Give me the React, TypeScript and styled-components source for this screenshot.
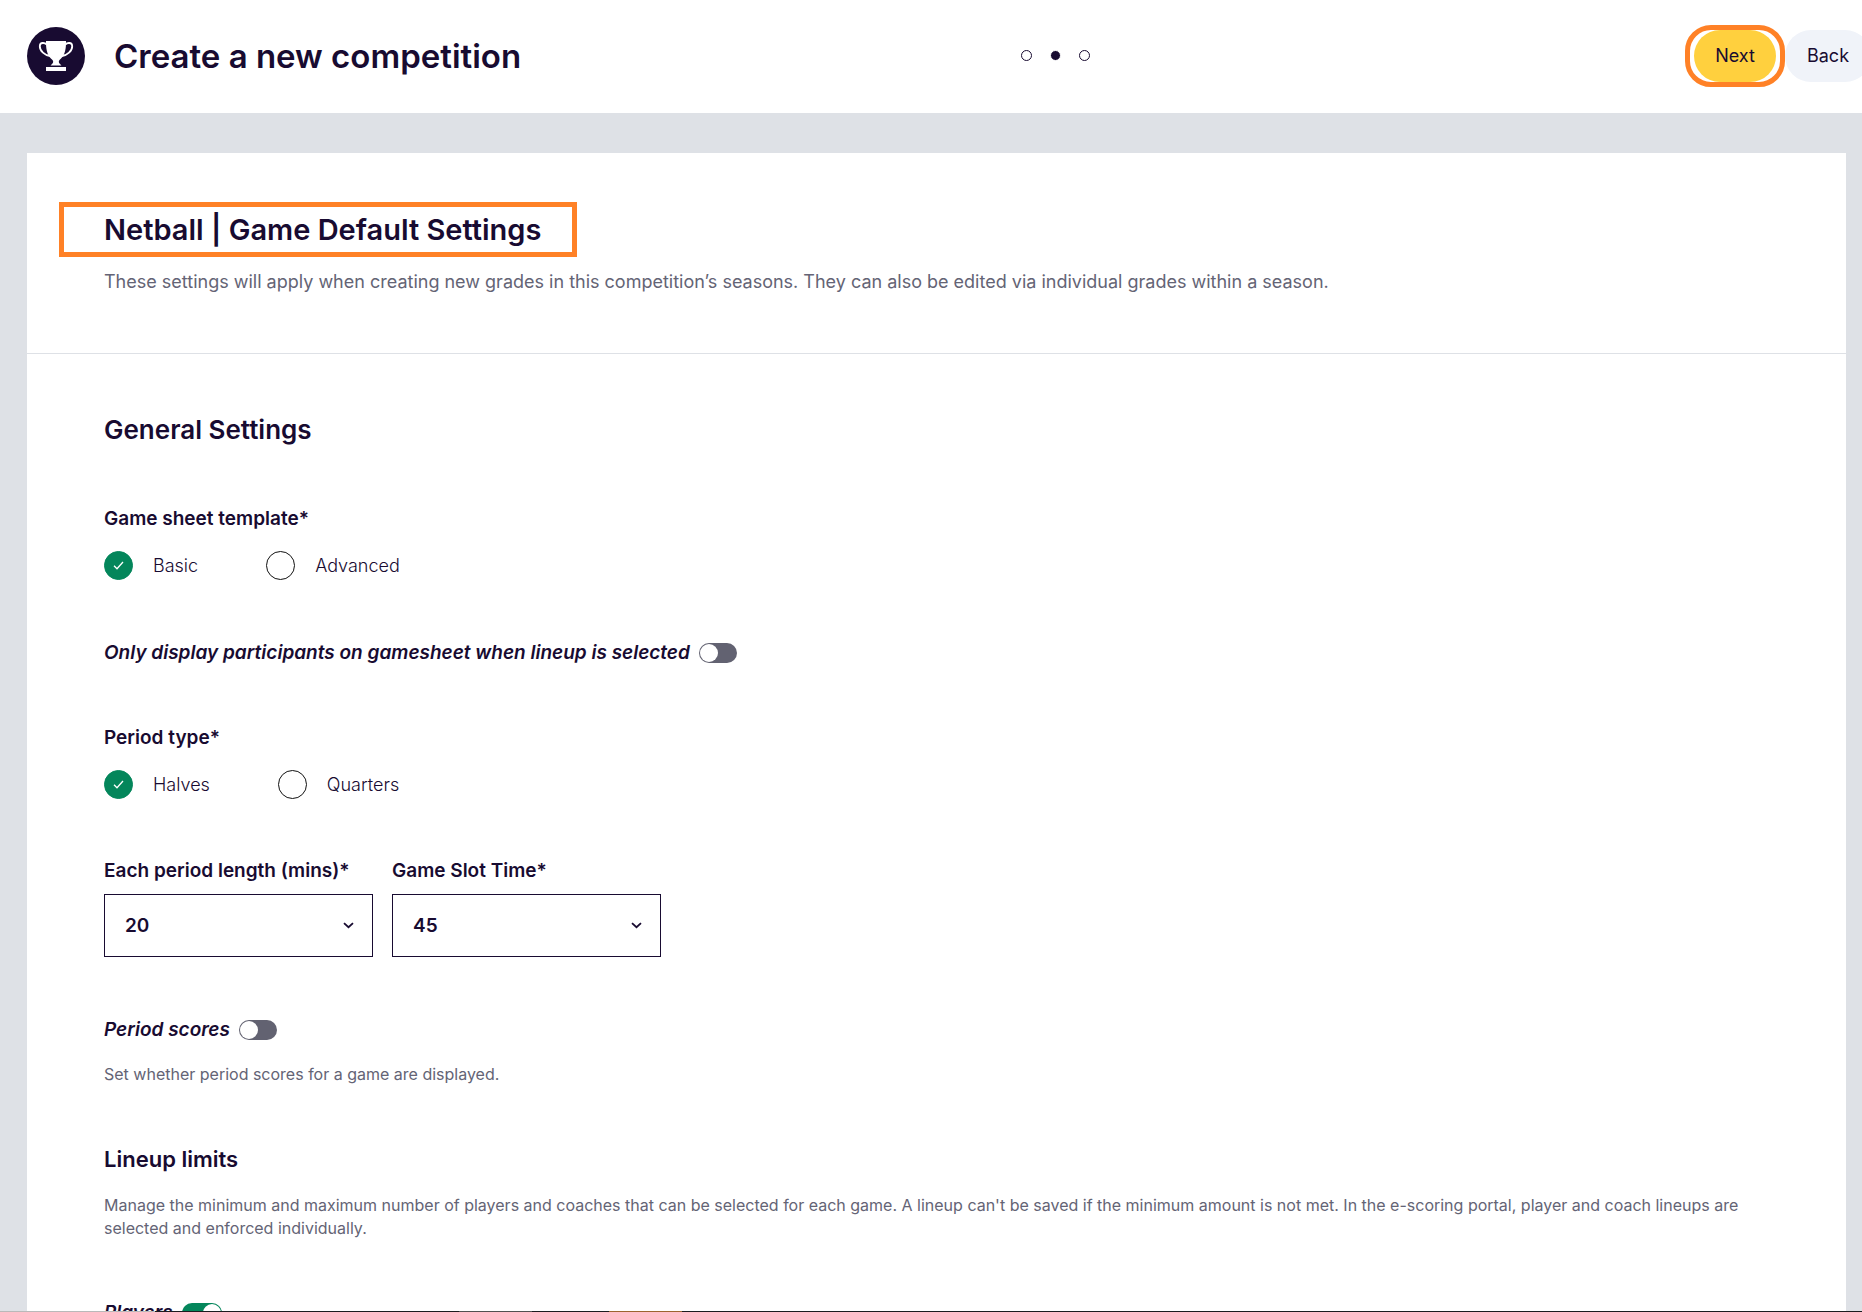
import React, { useState } from 'react';
import styled, { createGlobalStyle } from 'styled-components';

const ink = '#180b31';
const muted = '#646475';
const green = '#04865b';
const orange = '#ff8126';
const line = '#dee1e6';

const GlobalStyle = createGlobalStyle`
  *, *::before, *::after { box-sizing: border-box; }
  body { margin: 0; background: ${line}; }
  h1, h2, h3, h4, p { margin: 0; }
  body, button, input, select { font-family: Inter, "Liberation Sans", sans-serif; color: ${ink}; }
`;

const Shell = styled.div`
  display: flex;
  flex-direction: column;
  height: 100vh;
  overflow: hidden;
`;

const Header = styled.header`
  flex: none;
  display: grid;
  grid-template-columns: 14fr auto 11fr;
  align-items: center;
  height: 113px;
  padding: 0 0 2px 27px;
  margin-right: -9px;
  background: #fff;
`;

const Brand = styled.div`
  display: flex;
  align-items: center;
  gap: 29px;
`;

const PageTitle = styled.h1`
  font-size: 33px;
  line-height: 40px;
  font-weight: 600;
`;

const Steps = styled.ol`
  display: flex;
  align-items: center;
  gap: 18px;
  margin: 0;
  padding: 0;
  list-style: none;
`;

const Step = styled.li<{ $current?: boolean }>`
  width: 11px;
  height: 11px;
  border: 1px solid ${p => (p.$current ? '#fff' : ink)};
  border-radius: 50%;
  background: ${p => (p.$current ? ink : '#fff')};
`;

const Actions = styled.div`
  display: flex;
  justify-content: flex-end;
  align-items: center;
`;

const Highlight = styled.div`
  padding: 0 4px;
  border: 5px solid ${orange};
  border-radius: 26px;
`;

const PillButton = styled.button<{ $primary?: boolean }>`
  display: block;
  height: 52px;
  min-width: ${p => (p.$primary ? '82px' : '86px')};
  padding: 0;
  border: 0;
  border-radius: 26px;
  background: ${p => (p.$primary ? '#ffd03e' : '#f0f3f9')};
  font-size: 18px;
  line-height: 24px;
  cursor: pointer;
`;

const Main = styled.main`
  flex: 1;
  min-height: 0;
  padding: 40px 16px 0 27px;
  overflow-y: auto;
  scrollbar-width: none;
`;

const Panel = styled.div`
  background: #fff;
`;

const Intro = styled.section`
  padding: 49px 77px 57px;
  border-bottom: 1px solid ${line};
`;

const HighlightedTitle = styled.h2`
  width: fit-content;
  margin-left: -45px;
  padding: 5px 31px 5px 40px;
  border: 5px solid ${orange};
  font-size: 29px;
  line-height: 35px;
  font-weight: 600;
`;

const IntroText = styled.p`
  margin-top: 11px;
  font-size: 18px;
  line-height: 28px;
  color: ${muted};
`;

const Settings = styled.form`
  padding: 60px 77px;
`;

const SectionTitle = styled.h3`
  font-size: 26px;
  line-height: 32px;
  font-weight: 600;
`;

const Choice = styled.fieldset`
  min-width: 0;
  margin: 61px 0 0;
  padding: 0;
  border: 0;
`;

const Legend = styled.legend`
  padding: 0;
  font-size: 19px;
  line-height: 24px;
  font-weight: 600;
`;

const Options = styled.div`
  display: flex;
  flex-wrap: wrap;
  gap: 68px;
  margin-top: 20px;
`;

const Option = styled.label`
  display: flex;
  align-items: center;
  gap: 20px;
  font-size: 18px;
  line-height: 24px;
  font-weight: 300;
`;

const RadioMark = styled.span`
  display: grid;
  place-items: center;
  width: 29px;
  height: 29px;

  > * { grid-area: 1 / 1; }
  svg { pointer-events: none; }
`;

const Radio = styled.input`
  appearance: none;
  width: 29px;
  height: 29px;
  margin: 0;
  border: 1px solid #111;
  border-radius: 50%;
  background: #fff;

  &:checked {
    border-color: ${green};
    background: ${green};
  }
`;

const ToggleRow = styled.label`
  display: flex;
  align-items: center;
  gap: 9px;
  width: fit-content;
  margin-top: 61px;
  font-size: 19px;
  line-height: 24px;
  font-weight: 600;
  font-style: italic;
`;

const Switch = styled.input`
  appearance: none;
  display: flex;
  width: 38px;
  height: 20px;
  margin: 0;
  padding: 1px;
  border-radius: 10px;
  background: #626271;

  &::before {
    content: '';
    width: 18px;
    height: 18px;
    border-radius: 50%;
    background: #fff;
  }

  &:checked {
    width: 40px;
    justify-content: flex-end;
    background: ${green};
  }
`;

const SelectRow = styled.div`
  display: flex;
  flex-wrap: wrap;
  gap: 19px;
  margin-top: 60px;
`;

const Field = styled.label`
  width: 269px;
  font-size: 19px;
  line-height: 24px;
  font-weight: 600;
`;

const SelectBox = styled.span`
  position: relative;
  display: block;
  margin-top: 11px;

  svg {
    position: absolute;
    top: 28px;
    right: 19px;
    pointer-events: none;
  }
`;

const Select = styled.select`
  appearance: none;
  display: block;
  width: 100%;
  height: 63px;
  padding: 0 20px;
  border: 1px solid ${ink};
  border-radius: 0;
  background: #fff;
  font-size: 19px;
  font-weight: 600;
`;

const Hint = styled.p`
  margin-top: 21px;
  font-size: 16px;
  line-height: 23px;
  color: ${muted};
`;

const GroupTitle = styled.h4`
  margin-top: 59px;
  font-size: 22px;
  line-height: 28px;
  font-weight: 600;
`;

const Taskbar = styled.div`
  flex: none;
  height: 1px;
  background: linear-gradient(
    to right,
    #b9b9b9 0 155px,
    #1c1c1f 155px 459px,
    #505050 459px 532px,
    #1c1c1f 532px 609px,
    #9c6430 609px 682px,
    #1c1c1f 682px
  );
`;

function Trophy() {
  return (
    <svg width="58" height="58" viewBox="0 0 58 58" aria-hidden="true">
      <circle cx="29" cy="29" r="29" fill={ink} />
      <path d="M19 14h20v2c0 8-2 13.500-6.500 17-1 1-1 3 .5 4l1.500 1.500h-11L25 37c1.500-1 1.500-3 .5-4C21 29.500 19 24 19 16z" fill="#fff" />
      <path d="M19.500 17.500C18 15.500 13 15 12.800 19c-.2 5 5.200 9.500 10.200 10M38.500 17.500c1.500-2 6.500-2.500 6.700 1.500.2 5-5.200 9.500-10.200 10" fill="none" stroke="#fff" strokeWidth="1.800" />
      <rect x="19" y="40" width="20" height="4" fill="#fff" />
    </svg>
  );
}

function Chevron() {
  return (
    <svg width="11" height="7" viewBox="0 0 11 7" fill="none" aria-hidden="true">
      <path d="M1 1.200l4.500 4 4.500-4" stroke={ink} strokeWidth="1.800" />
    </svg>
  );
}

type RadioGroupProps = { legend: string; name: string; options: string[] };

function RadioGroup({ legend, name, options }: RadioGroupProps) {
  const [value, setValue] = useState(options[0]);
  return (
    <Choice>
      <Legend>{legend}</Legend>
      <Options>
        {options.map(option => (
          <Option key={option}>
            <RadioMark>
              <Radio type="radio" name={name} value={option} checked={value === option} onChange={() => setValue(option)} />
              {value === option && (
                <svg width="11" height="9" viewBox="0 0 11 9" fill="none" aria-hidden="true">
                  <path d="M1 4.800l3 3L10 1" stroke="#fff" strokeWidth="1.300" />
                </svg>
              )}
            </RadioMark>
            {option}
          </Option>
        ))}
      </Options>
    </Choice>
  );
}

function Toggle({ label, on = false }: { label: string; on?: boolean }) {
  return (
    <ToggleRow>
      {label}
      <Switch type="checkbox" role="switch" defaultChecked={on} />
    </ToggleRow>
  );
}

function SelectField({ label, values, initial }: { label: string; values: number[]; initial: number }) {
  return (
    <Field>
      {label}
      <SelectBox>
        <Select defaultValue={initial}>
          {values.map(v => (
            <option key={v}>{v}</option>
          ))}
        </Select>
        <Chevron />
      </SelectBox>
    </Field>
  );
}

export default function App() {
  return (
    <Shell>
      <GlobalStyle />
      <Header>
        <Brand>
          <Trophy />
          <PageTitle>Create a new competition</PageTitle>
        </Brand>
        <Steps>
          <Step />
          <Step $current aria-current="step" />
          <Step />
        </Steps>
        <Actions>
          <Highlight>
            <PillButton type="button" $primary>Next</PillButton>
          </Highlight>
          <PillButton type="button">Back</PillButton>
        </Actions>
      </Header>
      <Main>
        <Panel>
          <Intro>
            <HighlightedTitle>Netball | Game Default Settings</HighlightedTitle>
            <IntroText>
              These settings will apply when creating new grades in this competition’s seasons. They can also be edited via
              individual grades within a season.
            </IntroText>
          </Intro>
          <Settings>
            <SectionTitle>General Settings</SectionTitle>
            <RadioGroup legend="Game sheet template*" name="template" options={['Basic', 'Advanced']} />
            <Toggle label="Only display participants on gamesheet when lineup is selected" />
            <RadioGroup legend="Period type*" name="period" options={['Halves', 'Quarters']} />
            <SelectRow>
              <SelectField label="Each period length (mins)*" values={[10, 15, 20, 25]} initial={20} />
              <SelectField label="Game Slot Time*" values={[30, 45, 60]} initial={45} />
            </SelectRow>
            <Toggle label="Period scores" />
            <Hint>Set whether period scores for a game are displayed.</Hint>
            <GroupTitle>Lineup limits</GroupTitle>
            <Hint>
              Manage the minimum and maximum number of players and coaches that can be selected for each game. A lineup
              can't be saved if the minimum amount is not met. In the e-scoring portal, player and coach lineups are
              selected and enforced individually.
            </Hint>
            <Toggle label="Players" on />
          </Settings>
        </Panel>
      </Main>
      <Taskbar />
    </Shell>
  );
}
